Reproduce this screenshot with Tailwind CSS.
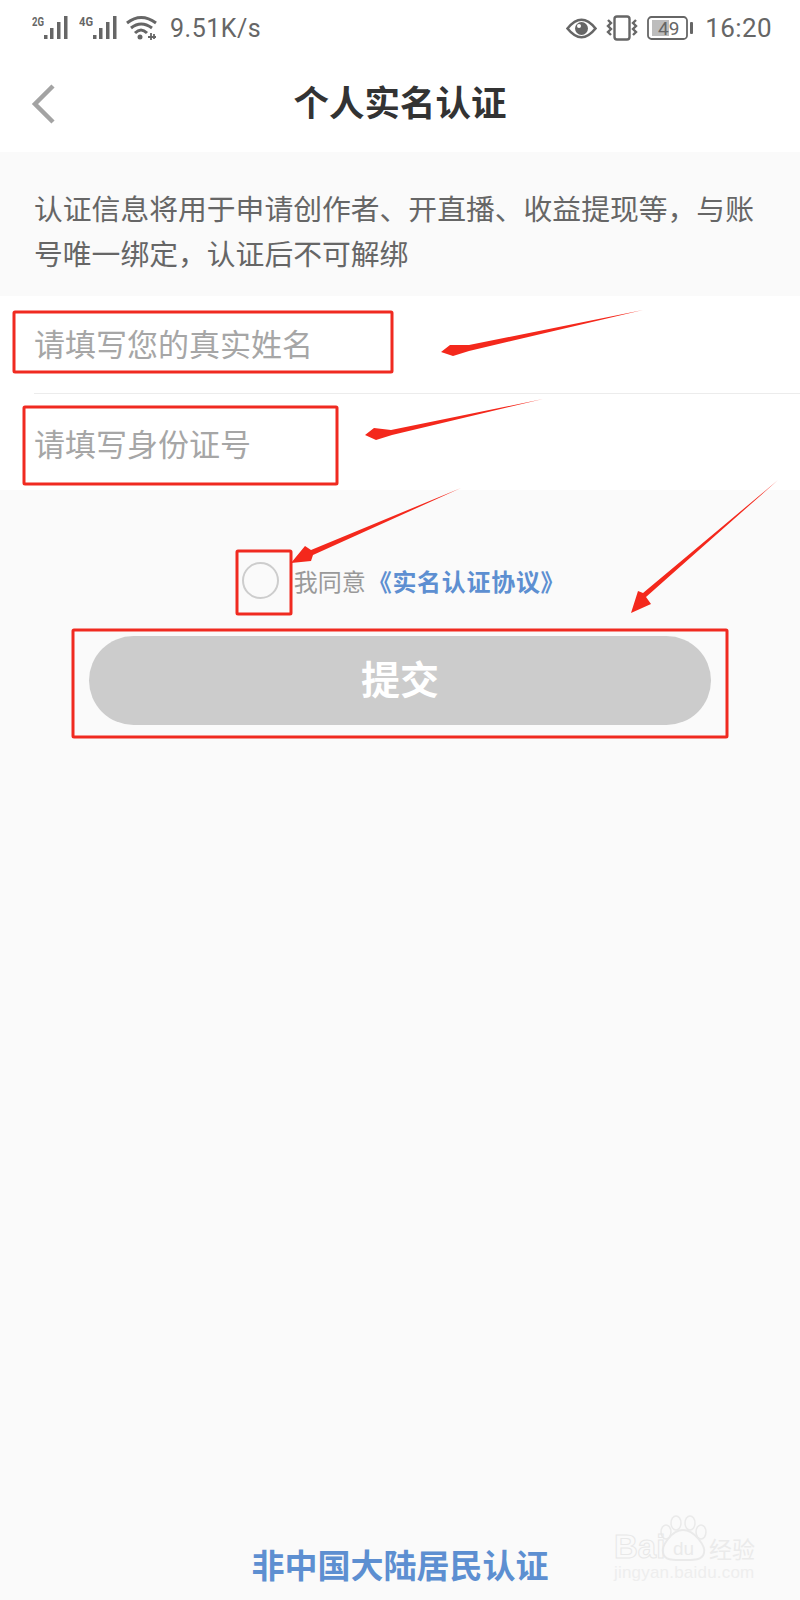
<!DOCTYPE html>
<html lang="en">
<head>
  <meta charset="UTF-8" />
  <meta name="viewport" content="width=device-width, initial-scale=1.0" />
  <title>个人实名认证</title>
  <script src="https://cdn.jsdelivr.net/npm/@tailwindcss/browser@4"></script>
</head>
<body class="bg-[#fafafa] font-['Noto_Sans_CJK_SC','Noto_Sans',sans-serif]">
  <div class="relative w-[800px] h-[1600px] flex flex-col overflow-hidden">

    <!-- Status bar -->
    <div class="h-[56px] bg-white flex items-center justify-between pl-[32px] pr-[28px] text-[#666] font-['Roboto',sans-serif]">
      <div class="flex items-center">
        <svg width="39" height="26" viewBox="0 0 39 26" class="mr-[8px]">
          <text x="0" y="11" font-size="12" font-weight="700" font-family="Roboto" fill="#666" textLength="12" lengthAdjust="spacingAndGlyphs">2G</text>
          <rect x="12" y="20" width="3.5" height="4" fill="#666"/><rect x="18" y="13" width="3.5" height="11" fill="#666"/><rect x="25" y="7" width="3.5" height="17" fill="#666"/><rect x="32" y="1" width="3.5" height="23" fill="#666"/>
        </svg>
        <svg width="40" height="26" viewBox="0 0 40 26" class="mr-[7px]">
          <text x="0" y="11" font-size="12" font-weight="700" font-family="Roboto" fill="#666" textLength="14" lengthAdjust="spacingAndGlyphs">4G</text>
          <rect x="14" y="20" width="3.5" height="4" fill="#666"/><rect x="20" y="13" width="3.5" height="11" fill="#666"/><rect x="27" y="7" width="3.5" height="17" fill="#666"/><rect x="34" y="1" width="3.5" height="23" fill="#666"/>
        </svg>
        <svg width="32" height="26" viewBox="0 0 32 26" fill="none" stroke="#666" stroke-width="3" class="mr-[12px]">
          <path d="M1 8Q15 -3 30 8"/><path d="M5 13Q15 5 26 13"/><path d="M9 18Q15 12 21 18"/>
          <circle cx="14" cy="22" r="2.5" fill="#666" stroke="none"/>
          <path d="M22 22h8M25 18v7M28 19v5" stroke-width="1.8"/>
        </svg>
        <span class="text-[25px] leading-none tracking-[0.5px]">9.51K/s</span>
      </div>
      <div class="flex items-center">
        <svg width="31" height="21" viewBox="0 0 31 21" class="mr-[9px]">
          <path d="M1.5 10.5Q15.5 -7 29.5 10.5Q15.5 28 1.5 10.5Z" fill="none" stroke="#666" stroke-width="2.6"/>
          <circle cx="15.5" cy="10.5" r="6.5" fill="#666"/>
          <circle cx="13" cy="8" r="2" fill="#fff"/>
        </svg>
        <svg width="32" height="26" viewBox="0 0 32 26" fill="none" stroke="#666" stroke-width="2.4" class="mr-[9px]">
          <rect x="8.5" y="1.5" width="15" height="23" rx="2.5"/>
          <path d="M2 5l3 3l-3 3l3 3l-3 3l3 3M30 5l-3 3l3 3l-3 3l3 3l-3 3"/>
        </svg>
        <svg width="47" height="24" viewBox="0 0 47 24" class="mr-[11px]">
          <rect x="1" y="1" width="39" height="22" rx="3.5" fill="none" stroke="#666" stroke-width="1.8"/>
          <rect x="5" y="4" width="17" height="16" fill="#bdbdbd"/>
          <text x="11" y="19" font-size="19" font-family="Roboto" fill="#666">49</text>
          <rect x="43" y="6" width="3" height="12" rx="1" fill="#666"/>
        </svg>
        <span class="text-[26px] leading-none tracking-[0.4px]">16:20</span>
      </div>
    </div>

    <!-- Nav -->
    <div class="relative h-[96px] bg-white flex items-center justify-center">
      <svg width="28" height="40" viewBox="0 0 28 40" fill="none" stroke="#a3a3a3" stroke-width="4.5" class="absolute left-[30px] top-[28px]">
        <path d="M23 2L5 20L23 38"/>
      </svg>
      <h1 class="text-[35.5px] leading-none font-bold text-[#333] -mt-[7px]">个人实名认证</h1>
    </div>

    <!-- Intro -->
    <div class="h-[144px] pl-[34px] pt-[33px] text-[#666] text-[28.8px] leading-[45px]">
      <p>认证信息将用于申请创作者、开直播、收益提现等，与账</p>
      <p>号唯一绑定，认证后不可解绑</p>
    </div>

    <!-- Form -->
    <div class="bg-white h-[194px] pl-[34px]">
      <div class="h-[98px] border-b border-[#ececec] flex items-center pb-[3px]">
        <input type="text" placeholder="请填写您的真实姓名" class="w-full text-[31px] outline-none placeholder:text-[#a6a6a6]" />
      </div>
      <div class="h-[96px] flex items-center pt-[2px]">
        <input type="text" placeholder="请填写身份证号" class="w-full text-[31px] outline-none placeholder:text-[#a6a6a6]" />
      </div>
    </div>

    <!-- Agreement -->
    <div class="mt-[72px] h-[37px] flex items-center justify-center pl-[7px]">
      <span class="w-[37px] h-[37px] rounded-full border-2 border-[#cdcdcd]"></span>
      <span class="ml-[15px] text-[24px] leading-none text-[#999]">我同意</span>
      <span class="text-[24px] leading-none font-bold text-[#5d8fd1] ml-[2px] tracking-[0.7px]">《实名认证协议》</span>
    </div>

    <!-- Submit -->
    <div class="px-[89px] mt-[37px]">
      <button class="w-full h-[89px] rounded-full bg-[#cccccc] text-white text-[39px] font-bold leading-none pb-[6px]">提交</button>
    </div>

    <!-- Non mainland link -->
    <div class="mt-auto pb-[15px] text-center text-[33px] leading-[42px] font-bold text-[#5d8fd1]">非中国大陆居民认证</div>

    <!-- Baidu watermark -->
    <div class="absolute left-[614px] top-[1515px] w-[146px] h-[70px]">
      <svg width="146" height="48" viewBox="0 0 146 48" fill="none" stroke="#eaeaea" stroke-width="1.5" class="absolute left-0 top-0">
        <ellipse cx="52" cy="17" rx="5" ry="7"/>
        <ellipse cx="62" cy="8" rx="5" ry="7"/>
        <ellipse cx="76" cy="8" rx="5" ry="7"/>
        <ellipse cx="87" cy="17" rx="5" ry="7"/>
        <path d="M69 15C57 15 47 32 49 38C51 46 60 45 69 45C78 45 88 46 90 38C92 32 81 15 69 15Z" stroke-width="2"/>
      </svg>
      <span class="absolute left-0 top-[15px] text-[33px] leading-[34px] font-bold font-['Liberation_Sans',sans-serif] text-transparent [-webkit-text-stroke:1px_#e8e8e8]">Bai</span>
      <span class="absolute left-[59px] top-[24px] text-[19px] leading-[20px] font-['Liberation_Sans',sans-serif] text-[#eaeaea]">du</span>
      <span class="absolute left-[95px] top-[20px] text-[23px] leading-[26px] text-[#ebebeb]">经验</span>
      <span class="absolute left-0 top-[49px] text-[17px] leading-[18px] tracking-[0.2px] font-['Liberation_Sans',sans-serif] text-[#eeeeee]">jingyan.baidu.com</span>
    </div>

    <!-- Red annotations, drawn over the screenshot -->
    <svg width="800" height="1600" viewBox="0 0 800 1600" class="absolute inset-0 pointer-events-none">
      <g fill="none" stroke="#f02a20" stroke-width="3" stroke-linejoin="round">
        <rect x="14" y="312" width="378" height="60" rx="1"/>
        <rect x="24" y="407" width="313" height="77" rx="1"/>
        <rect x="237" y="551" width="54" height="63" rx="1"/>
        <rect x="73" y="630" width="654" height="107" rx="1"/>
      </g>
      <g fill="#f4281c">
        <polygon points="643,310 469,345 450,345 441,352 453,356 469,351"/>
        <polygon points="543,399 391,430 374,428 365,435 376,440 392,435"/>
        <polygon points="461,488 311,550 305,546 291,563 311,561 313,555"/>
        <polygon points="778,480 643,593 638,591 631,613 651,604 646,597"/>
      </g>
    </svg>
  </div>
</body>
</html>
